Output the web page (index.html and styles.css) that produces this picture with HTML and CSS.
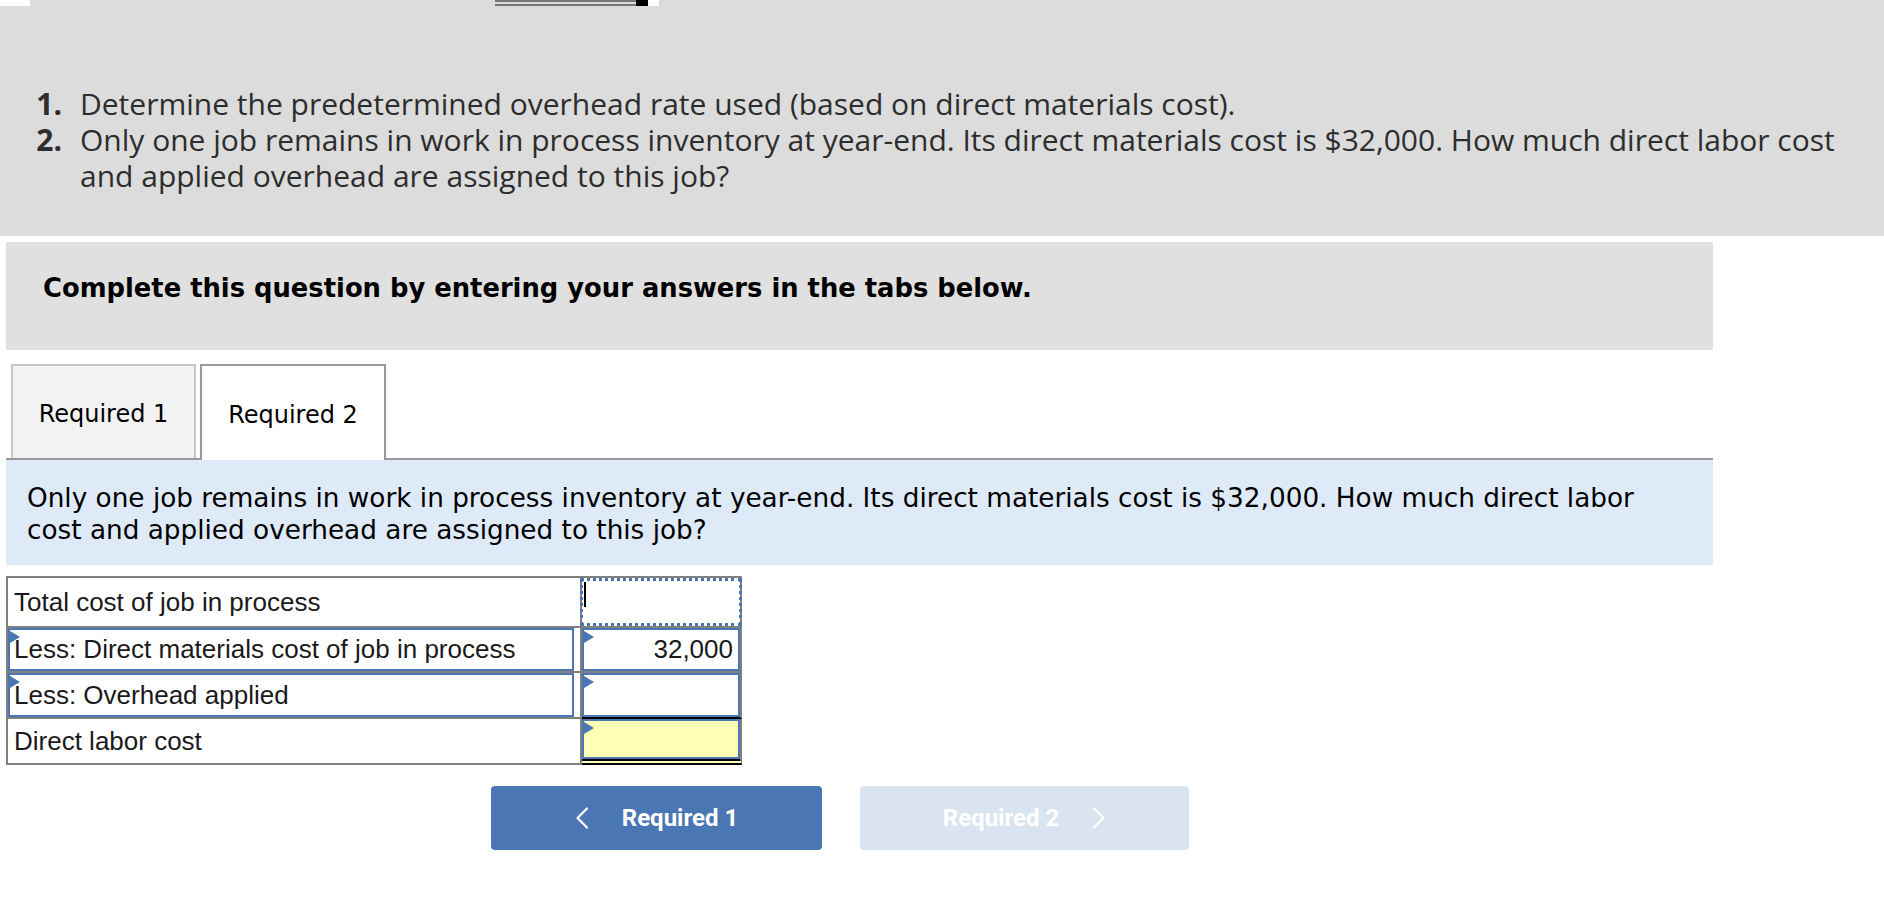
FILE: index.html
```html
<!DOCTYPE html>
<html>
<head>
<meta charset="utf-8">
<link rel="stylesheet" href="styles.css">
</head>
<body>
<div class="page">
  <div class="strip-white-a"></div>
  <div class="strip-lines"><span class="cap"></span></div>
  <div class="strip-white-b"></div>

  <section class="prompt">
    <div class="item"><span class="num">1.</span><span class="txt">Determine the predetermined overhead rate used (based on direct materials cost).</span></div>
    <div class="item"><span class="num">2.</span><span class="txt">Only one job remains in work in process inventory at year-end. Its direct materials cost is $32,000. How much direct labor cost<br>and applied overhead are assigned to this job?</span></div>
  </section>

  <section class="instr">Complete this question by entering your answers in the tabs below.</section>

  <nav class="tabs">
    <div class="tab tab-off">Required 1</div>
    <div class="tab tab-on">Required 2</div>
  </nav>

  <section class="question">Only one job remains in work in process inventory at year-end. Its direct materials cost is $32,000. How much direct labor<br>cost and applied overhead are assigned to this job?</section>

  <div class="ws">
    <div class="cell lbl r1">Total cost of job in process</div>
    <div class="cell val r1 focus"><span class="caret"></span></div>

    <div class="cell lbl r2"><div class="box"><span class="tri"></span>Less: Direct materials cost of job in process</div></div>
    <div class="cell val r2"><div class="box num-right"><span class="tri"></span>32,000</div></div>

    <div class="cell lbl r3"><div class="box"><span class="tri"></span>Less: Overhead applied</div></div>
    <div class="cell val r3 under1"><div class="box"><span class="tri"></span></div></div>

    <div class="cell lbl r4">Direct labor cost</div>
    <div class="cell val r4 under2"><div class="box yellow"><span class="tri"></span></div></div>
  </div>

  <div class="navbtns">
    <button class="btn btn-prev">
      <svg class="chev" viewBox="0 0 14 22" width="14" height="22"><polyline points="12,1.5 2.5,11 12,20.5" fill="none" stroke="#fff" stroke-width="2.2" stroke-linecap="round" stroke-linejoin="round"/></svg>
      <span>Required 1</span>
    </button>
    <button class="btn btn-next">
      <span>Required 2</span>
      <svg class="chev" viewBox="0 0 14 22" width="14" height="22"><polyline points="2,1.5 11.5,11 2,20.5" fill="none" stroke="#fff" stroke-width="2.2" stroke-linecap="round" stroke-linejoin="round"/></svg>
    </button>
  </div>
</div>
</body>
</html>
```

FILE: styles.css
```css
* { box-sizing: border-box; }
html, body { margin: 0; padding: 0; background: #fff; }
body { font-family: "DejaVu Sans", Verdana, sans-serif; color: #000; }
.page { position: relative; width: 1884px; }

/* top strip overlays */
.strip-white-a { position: absolute; left: 0; top: 0; width: 30px; height: 6px; background: #fff; }
.strip-lines { position: absolute; left: 495px; top: 0; width: 153px; height: 6px;
  border-top: 2px solid #777; border-bottom: 2px solid #777; }
.strip-lines .cap { position: absolute; right: 0; top: -2px; width: 12px; height: 6px; background: #000; }
.strip-white-b { position: absolute; left: 648px; top: 0; width: 11px; height: 6px; background: #fff; }

/* prompt panel */
.prompt { background: #dcdcdc; height: 236px; padding: 86px 0 0 0;
  font-family: "Open Sans", Lato, sans-serif; font-size: 30px; line-height: 36px; color: #2d2d2d; }
.item { display: flex; }
.num { width: 62px; text-align: right; font-weight: 700; flex: none; }
.txt { padding-left: 18px; }

/* instructions */
.instr { margin: 6px 0 0 6px; width: 1707px; height: 108px; background: #e0e0e0;
  padding: 31px 0 0 37px; font-weight: 700; font-size: 25.8px; line-height: 30px; }

/* tabs */
.tabs { display: flex; gap: 4px; margin: 14px 0 0 6px; width: 1707px; padding-left: 5px;
  border-bottom: 2px solid #999; }
.tab { width: 185px; display: flex; align-items: center; justify-content: center;
  font-size: 24px; line-height: 28px; padding-top: 4px; }
.tab-off { height: 94px; background: #f2f2f2; border: 2px solid #c6c6c6; border-bottom: none; }
.tab-on { height: 96px; margin-bottom: -2px; width: 186px; background: #fff; border: 2px solid #999;
  border-bottom: none; position: relative; z-index: 1; }

/* question */
.question { margin-left: 6px; width: 1707px; height: 105px; background: #deeaf7;
  padding: 22px 0 0 21px; font-size: 26.3px; line-height: 32px; }

/* worksheet */
.ws { margin: 11px 0 0 6px; width: 736px; display: grid; grid-template-columns: 574px 160px;
  grid-template-rows: 50px 45px 46px 46px;
  border-top: 2px solid #808080; border-left: 2px solid #808080;
  font-family: "Liberation Sans", Arial, sans-serif; font-size: 26px; color: #1a1a1a; }
.cell { border-right: 2px solid #808080; border-bottom: 2px solid #808080; position: relative; }
.lbl { display: flex; align-items: center; padding-left: 6px; }
.lbl .box { margin-left: -6px; }
.box { position: relative; width: 100%; height: 100%; border: 2px solid #4a76b4;
  display: flex; align-items: center; padding-left: 4px; }
.num-right { justify-content: flex-end; padding: 0 5px 0 0; }
.yellow { background: #ffffb6; }
.tri { position: absolute; left: 0; top: 1px; width: 0; height: 0;
  border-left: 10px solid #4a76b4; border-top: 6px solid transparent; border-bottom: 6px solid transparent; }
.focus::after { content: ""; position: absolute; left: -2px; top: 0; right: -2px; bottom: 0;
  border: 3px dotted #4a76b4; }
.caret { position: absolute; left: 2px; top: 4px; width: 2px; height: 25px; background: #000; }
.under1 { border-bottom-color: #000; }
.under2 { border-bottom: 6px double #000; background: #ffffb6; }

/* nav buttons */
.navbtns { display: flex; gap: 38px; margin: 21px 0 0 491px; }
.btn { height: 64px; border: none; border-radius: 4px; display: flex; align-items: center;
  justify-content: center; gap: 33px; color: #fff;
  font-family: Roboto, "Liberation Sans", sans-serif; font-weight: 700; font-size: 24px; padding: 0; }
.btn-prev { width: 331px; background: #4a76b4; }
.btn-next { width: 329px; background: #dae4f0; }
.chev { display: block; }
```
